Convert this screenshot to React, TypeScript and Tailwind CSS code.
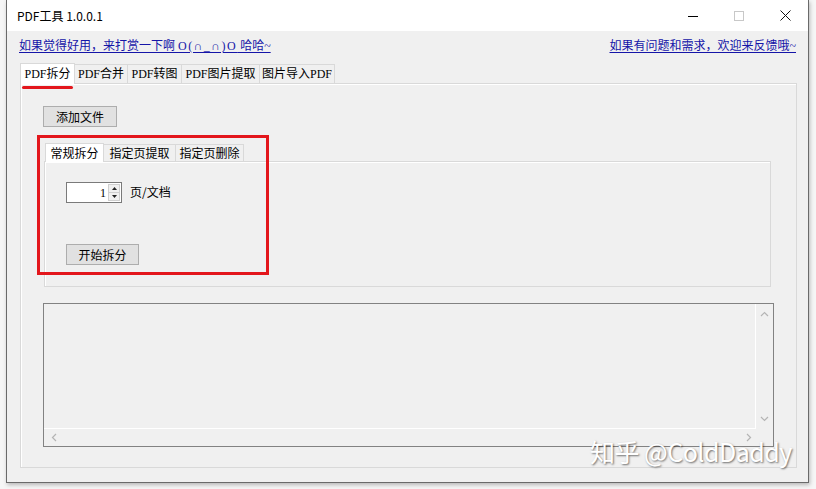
import React from "react";

const serif = "font-['Liberation_Serif','Noto_Sans_CJK_SC',serif]";
const sans = "font-['Noto_Sans_CJK_SC','Noto_Sans',sans-serif]";

const mainTabs = [
    { label: "PDF拆分", w: "w-[55px]" },
    { label: "PDF合并", w: "w-[53px]" },
    { label: "PDF转图", w: "w-[54px]" },
    { label: "PDF图片提取", w: "w-[78px]" },
    { label: "图片导入PDF", w: "w-[75px]" },
];

const subTabs = [
    { label: "常规拆分", w: "w-[59px]" },
    { label: "指定页提取", w: "w-[72px]" },
    { label: "指定页删除", w: "w-[68px]" },
];

const Chevron: React.FC<{ d: string }> = ({ d }) => (
    <svg width="9" height="9" viewBox="0 0 9 9" fill="none" stroke="#b4b4b4" strokeWidth="1.2">
        <path d={d} />
    </svg>
);

const WinButton: React.FC<{ children: React.ReactNode; className?: string }> = ({ children, className }) => (
    <div
        className={`h-[21px] flex items-center justify-center bg-[#e1e1e1] border border-[#adadad] text-[12px] text-black ${sans} ${className ?? ""}`}
    >
        {children}
    </div>
);

const App: React.FC = () => {
    return (
        <div className="w-[816px] h-[489px] bg-[#f6f6f6] overflow-hidden">
            <div className="relative ml-[6px] w-[803px] h-[483px] border-x border-b border-[#6a6a6a] shadow-[1px_2px_4px_rgba(0,0,0,0.25)] flex flex-col">
                {/* title bar */}
                <div className="h-[31px] bg-white flex items-center">
                    <span className={`pl-[10px] pt-[1px] text-[12px] text-black ${sans}`}>PDF工具 1.0.0.1</span>
                    <div className="ml-auto flex h-full">
                        <div className="w-[46px] flex items-center justify-center">
                            <div className="w-[10px] h-[1px] bg-black mt-[1px]" />
                        </div>
                        <div className="w-[46px] flex items-center justify-center">
                            <div className="w-[10px] h-[10px] border border-[#c8c8c8]" />
                        </div>
                        <div className="w-[46px] flex items-center justify-center">
                            <svg width="11" height="11" viewBox="0 0 11 11" stroke="#111" strokeWidth="1">
                                <path d="M0.5 0.5 L10.5 10.5 M10.5 0.5 L0.5 10.5" />
                            </svg>
                        </div>
                    </div>
                </div>

                {/* body */}
                <div className="flex-1 bg-[#f0f0f0] pl-[13px] pr-[10px] pt-[7px] flex flex-col">
                    <div className={`h-[16px] flex items-center justify-between text-[12px] text-[#1515a8] ${serif}`}>
                        <span className="underline underline-offset-2 -ml-[1px]">
                            如果觉得好用，来打赏一下啊 <span className="tracking-[1.5px]">O(∩_∩)O</span> 哈哈~
                        </span>
                        <span className="underline underline-offset-2 mr-[2px]">如果有问题和需求，欢迎来反馈哦~</span>
                    </div>

                    {/* main tabs */}
                    <div className={`mt-[8px] h-[21px] flex items-end text-[12px] text-black ${serif}`}>
                        {mainTabs.map((t, i) =>
                            i === 0 ? (
                                <div
                                    key={t.label}
                                    className={`${t.w} h-[21px] bg-white border-x border-t border-[#d9d9d9] flex items-center justify-center -mb-[1px] relative z-10`}
                                >
                                    {t.label}
                                </div>
                            ) : (
                                <div
                                    key={t.label}
                                    className={`${t.w} h-[19px] bg-[#f0f0f0] border-t border-r border-[#d9d9d9] flex items-center justify-center`}
                                >
                                    {t.label}
                                </div>
                            )
                        )}
                    </div>

                    {/* tab page */}
                    <div className="w-[777px] h-[385px] border border-[#d9d9d9] shadow-[inset_1px_1px_0_#fff] bg-[#f0f0f0] pl-[22px] pt-[22px] flex flex-col">
                        <WinButton className="w-[74px]">添加文件</WinButton>

                        {/* sub tabs */}
                        <div className={`mt-[15px] ml-[2px] h-[19px] flex items-end text-[12px] text-black ${sans}`}>
                            {subTabs.map((t, i) =>
                                i === 0 ? (
                                    <div
                                        key={t.label}
                                        className={`${t.w} h-[19px] bg-white border-x border-t border-[#d9d9d9] flex items-center justify-center -mb-[1px] relative z-10`}
                                    >
                                        {t.label}
                                    </div>
                                ) : (
                                    <div
                                        key={t.label}
                                        className={`${t.w} h-[17px] bg-[#f0f0f0] border-t border-r border-[#d9d9d9] flex items-center justify-center`}
                                    >
                                        {t.label}
                                    </div>
                                )
                            )}
                        </div>
                        <div className="ml-[1px] w-[727px] h-[126px] border border-[#d9d9d9] shadow-[inset_1px_1px_0_#fff] pl-[21px] pt-[20px] flex flex-col">
                            <div className="flex items-center">
                                <div className="w-[56px] h-[21px] bg-white border border-[#7a7a7a] flex items-center">
                                    <span className={`flex-1 text-right pr-[2px] text-[12px] text-black ${serif}`}>1</span>
                                    <div className="w-[12px] h-[17px] mr-[1px] flex flex-col border border-[#cfcfcf] bg-[#f0f0f0]">
                                        <div className="flex-1 flex items-center justify-center border-b border-[#cfcfcf]">
                                            <svg width="5" height="3" viewBox="0 0 5 3"><path d="M2.5 0 L5 3 L0 3 Z" fill="#222" /></svg>
                                        </div>
                                        <div className="flex-1 flex items-center justify-center">
                                            <svg width="5" height="3" viewBox="0 0 5 3"><path d="M0 0 L5 0 L2.5 3 Z" fill="#222" /></svg>
                                        </div>
                                    </div>
                                </div>
                                <span className={`ml-[8px] -mt-[2px] text-[12px] text-black ${sans}`}>页/文档</span>
                            </div>
                            <WinButton className="mt-[41px] w-[73px]">开始拆分</WinButton>
                        </div>

                        {/* output box */}
                        <div className="mt-[16px] w-[731px] h-[144px] border border-[#828282] bg-[#f0f0f0] flex flex-col">
                            <div className="flex-1 flex">
                                <div className="flex-1 border-r border-b border-white" />
                                <div className="w-[17px] flex flex-col items-center justify-between py-[6px]">
                                    <Chevron d="M1 6 L4.5 2.5 L8 6" />
                                    <Chevron d="M1 3 L4.5 6.5 L8 3" />
                                </div>
                            </div>
                            <div className="h-[17px] flex items-center justify-between pl-[6px] pr-[20px]">
                                <Chevron d="M6 1 L2.5 4.5 L6 8" />
                                <Chevron d="M3 1 L6.5 4.5 L3 8" />
                            </div>
                        </div>
                    </div>
                </div>

                {/* red annotation marks */}
                <div className="absolute left-[15px] top-[86px] w-[51px] h-[3px] rounded-full bg-[#e3161c]" />
                <div className="absolute left-[30px] top-[135px] w-[232px] h-[140px] border-[3px] border-[#e3161c]" />

                {/* watermark */}
                <div
                    className={`absolute left-[583px] top-[436px] text-[25px] leading-[30px] text-white tracking-[-0.5px] ${sans} [text-shadow:1px_1px_2px_rgba(0,0,0,0.55)]`}
                >
                    知乎 @ColdDaddy
                </div>
            </div>
        </div>
    );
};

export default App;
